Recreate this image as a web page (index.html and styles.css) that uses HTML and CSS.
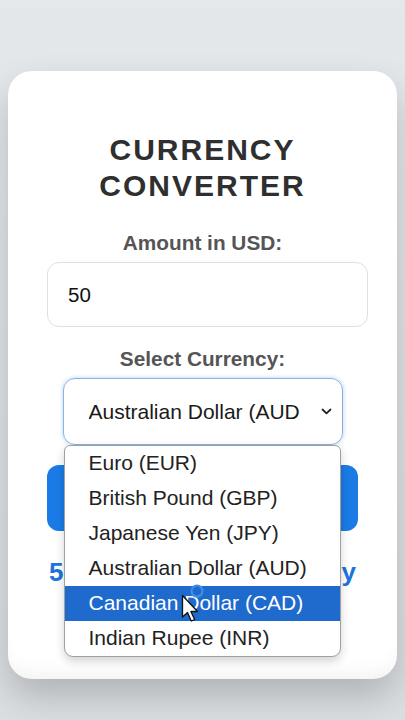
FILE: index.html
```html
<!DOCTYPE html>
<html lang="en">
<head>
    <meta charset="UTF-8">
    <meta name="viewport" content="width=device-width, initial-scale=1.0">
    <title>Currency Converter</title>
    <link rel="stylesheet" href="styles.css">
</head>
<body>
    <main class="card">
        <h1 class="title">CURRENCY<br>CONVERTER</h1>

        <label class="field-label" for="amount">Amount in USD:</label>
        <div class="amount-box" id="amount">50</div>

        <label class="field-label" for="currency">Select Currency:</label>
        <div class="select-wrap">
            <div class="select-box" id="currency">
                <span class="select-value">Australian Dollar (AUD</span>
                <svg class="chevron" width="11" height="7" viewBox="0 0 11 7">
                    <path d="M1.5 1.5 L5.5 5.3 L9.5 1.5" fill="none" stroke="#222" stroke-width="1.8" stroke-linecap="round" stroke-linejoin="round"/>
                </svg>
            </div>

            <!-- open dropdown list -->
            <ul class="dropdown">
                <li class="option">Euro (EUR)</li>
                <li class="option">British Pound (GBP)</li>
                <li class="option">Japanese Yen (JPY)</li>
                <li class="option">Australian Dollar (AUD)</li>
                <li class="option active">Canadian Dollar (CAD)</li>
                <li class="option">Indian Rupee (INR)</li>
            </ul>

            <svg class="pointer" width="32" height="30" viewBox="0 0 32 30">
                <path d="M1.5 1.5 L1.5 23 L6.5 18.5 L10.3 27 L13.6 25.6 L9.9 17.5 L16.5 17.5 Z" fill="#fff" stroke="#111" stroke-width="1.3" stroke-linejoin="round"/>
                <circle cx="16" cy="-3" r="5.5" fill="none" stroke="#3d8ee8" stroke-width="2.2"/>
            </svg>
        </div>

        <button class="convert-btn">Convert</button>

        <p class="result">50 USD = 75.50 Currency</p>
    </main>
</body>
</html>
```

FILE: styles.css
```css
:root {
    --blue: #1a7be6;
    --text: #2f2f2f;
    --label: #555555;
}

* {
    margin: 0;
    padding: 0;
    box-sizing: border-box;
    font-family: 'Liberation Sans', Arial, sans-serif;
}

body {
    min-height: 720px;
    background: linear-gradient(180deg, #e5e8eb 0%, #dcdfe2 100%);
    padding: 71px 8px 41px;
}

.card {
    background: #ffffff;
    border-radius: 24px;
    box-shadow: 0 18px 36px rgba(0, 0, 0, 0.2), inset 0 -18px 24px -18px rgba(0, 0, 0, 0.08);
    padding: 61px 39px 92px;
    display: flex;
    flex-direction: column;
    align-items: center;
}

.title {
    font-size: 30px;
    line-height: 36px;
    font-weight: 700;
    letter-spacing: 2px;
    color: var(--text);
    text-align: center;
    margin-bottom: 27px;
}

.field-label {
    font-size: 20.8px;
    line-height: 24px;
    font-weight: 700;
    color: var(--label);
    margin-bottom: 7px;
}

.amount-box {
    width: 321px;
    height: 65px;
    margin-left: 10px;
    border: 1px solid #e0e0e0;
    border-radius: 12px;
    padding-left: 20px;
    display: flex;
    align-items: center;
    font-size: 20.5px;
    color: #111;
    margin-bottom: 20px;
}

.select-wrap {
    position: relative;
    width: 280px;
    margin-bottom: 20px;
}

.select-box {
    height: 67px;
    border: 1.5px solid #86b2e6;
    border-radius: 12px;
    box-shadow: 0 0 4px rgba(40, 120, 220, 0.35);
    padding: 0 10px 0 25px;
    display: flex;
    align-items: center;
    justify-content: space-between;
    font-size: 21px;
    color: #1a1a1a;
}

.select-value {
    white-space: nowrap;
    overflow: hidden;
}

.dropdown {
    position: absolute;
    top: 67px;
    left: 1px;
    width: 277px;
    list-style: none;
    background: #ffffff;
    border: 1px solid #a0a0a0;
    border-radius: 6px 6px 9px 9px;
    box-shadow: 0 4px 10px rgba(0, 0, 0, 0.18);
    overflow: hidden;
    z-index: 5;
}

.option {
    height: 35px;
    line-height: 33px;
    padding: 0 0 2px 24px;
    font-size: 21px;
    color: #222;
}

.option.active {
    background: #1f6acd;
    color: #ffffff;
}

.pointer {
    position: absolute;
    top: 216px;
    left: 118px;
    overflow: visible;
    z-index: 6;
}

.convert-btn {
    width: 311px;
    height: 66px;
    border: none;
    border-radius: 12px;
    background: var(--blue);
    color: #fff;
    font-size: 20px;
    font-weight: 700;
    margin-bottom: 26px;
}

.result {
    font-size: 26px;
    line-height: 30px;
    font-weight: 700;
    color: #1c74dc;
    text-align: center;
    white-space: nowrap;
}
```
